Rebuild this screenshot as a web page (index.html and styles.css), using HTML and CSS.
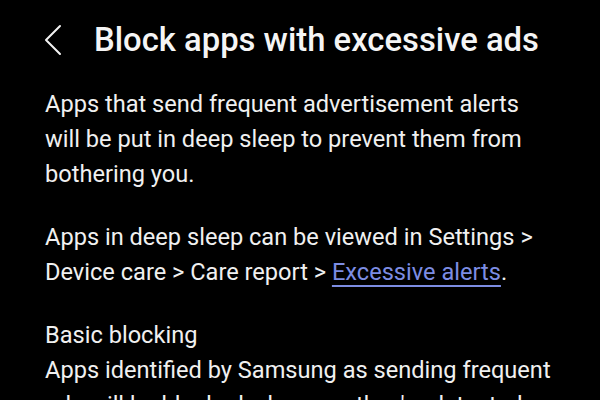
FILE: index.html
```html
<!DOCTYPE html>
<html>
<head>
<meta charset="utf-8">
<link rel="stylesheet" href="styles.css">
</head>
<body>
<div class="screen">
  <header class="top">
    <span class="back">
      <svg width="20" height="32" viewBox="0 0 20 32"><path d="M16 2 L2 16 L16 30" fill="none" stroke="#f2f2f2" stroke-width="2" stroke-linecap="round" stroke-linejoin="round"/></svg>
    </span>
    <h1 class="title">Block apps with excessive ads</h1>
  </header>
  <main class="content">
    <p class="para">Apps that send frequent advertisement alerts will be put in deep sleep to prevent them from bothering you.</p>
    <p class="para">Apps in deep sleep can be viewed in Settings &gt; Device care &gt; Care report &gt; <a class="link" href="#">Excessive alerts</a>.</p>
    <p class="para">Basic blocking<br>Apps identified by Samsung as sending frequent ads will be blocked whenever they're detected on your phone.</p>
  </main>
</div>
</body>
</html>
```
FILE: styles.css
```css
html, body {
  margin: 0;
  padding: 0;
  background: #000;
}
.screen {
  width: 600px;
  height: 400px;
  overflow: hidden;
  background: #000;
  color: #f0f0f0;
  font-family: Roboto, "Noto Sans", sans-serif;
}
.top {
  display: flex;
  align-items: center;
  height: 80px;
  padding-left: 44px;
  box-sizing: border-box;
}
.back {
  display: flex;
  width: 20px;
  height: 32px;
  margin-right: 30px;
}
.title {
  margin: 0;
  font-size: 32.8px;
  font-weight: 500;
  color: #f5f5f5;
  line-height: 36px;
}
.content {
  width: 512px;
  padding: 7px 0 0 45px;
}
.para {
  margin: 0 0 28px 0;
  font-size: 23.6px;
  line-height: 35px;
}
.link {
  color: #7d8de3;
  text-decoration: underline;
  text-underline-offset: 5px;
  text-decoration-thickness: 2px;
}
```
